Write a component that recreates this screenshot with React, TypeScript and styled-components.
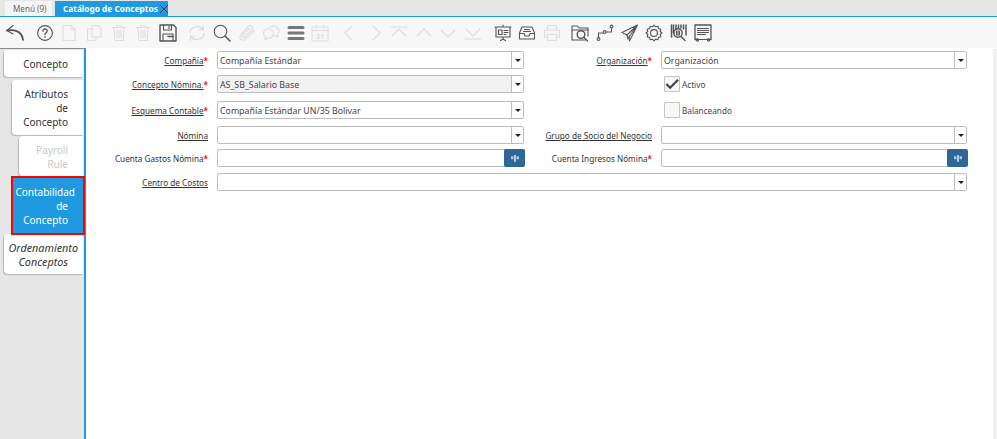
import React from "react";
import styled, { createGlobalStyle } from "styled-components";

const Global = createGlobalStyle`
  html, body { margin: 0; padding: 0; height: 100%; background: #fff; overflow: hidden; }
  #root { height: 100%; }
  * { box-sizing: border-box; }
  body { font-family: "Noto Sans", "Open Sans", sans-serif; }
`;

const Page = styled.div`
  width: 997px;
  height: 439px;
  display: flex;
  flex-direction: column;
`;

const TabBar = styled.div`
  height: 17px;
  flex: none;
  display: flex;
  align-items: flex-start;
  gap: 3px;
  padding: 1px 0 0 5px;
  background: #e6e6e6;
  border-bottom: 1px solid #1f9ae0;
`;

const WindowTab = styled.div<{ $active?: boolean }>`
  position: relative;
  height: 15px;
  width: ${(p) => (p.$active ? "113px" : "47px")};
  padding-left: 8px;
  font-size: ${(p) => (p.$active ? "8.3px" : "8.1px")};
  line-height: 15px;
  font-weight: ${(p) => (p.$active ? 700 : 400)};
  color: ${(p) => (p.$active ? "#fff" : "#666")};
  background: ${(p) => (p.$active ? "#1f9ae0" : "#f5f5f5")};
  white-space: nowrap;
`;

const CloseMark = styled.svg`
  position: absolute;
  right: -1px;
  top: 3px;
  width: 10px;
  height: 10px;
`;

const Toolbar = styled.div`
  height: 31px;
  flex: none;
  display: flex;
  align-items: center;
  padding-left: 3px;
  gap: 5px;
  background: #f7f7f7;
`;

const ToolGroup = styled.div<{ $pull?: boolean }>`
  display: flex;
  margin-left: ${(p) => (p.$pull ? "-1px" : "0")};
`;

const Tool = styled.svg<{ $off?: boolean }>`
  width: 18px;
  height: 18px;
  margin: 0 3.3px;
  fill: none;
  stroke: ${(p) => (p.$off ? "#dedede" : "#555")};
  stroke-width: 1.1;
  stroke-linecap: round;
  stroke-linejoin: round;
  text {
    fill: ${(p) => (p.$off ? "#dedede" : "#555")};
    stroke: none;
    font-size: 7px;
    font-weight: 700;
    text-anchor: middle;
  }
`;

const Main = styled.div`
  flex: 1;
  display: flex;
  min-height: 0;
`;

const Sidebar = styled.nav`
  width: 86px;
  flex: none;
  display: flex;
  flex-direction: column;
  padding-top: 1px;
  background: #e6e6e6;
  border-top: 1px solid #8a8a8a;
  border-right: 2px solid #1f9ae0;
`;

const SideTab = styled.div<{
  $indent: number;
  $height: number;
  $top?: number;
  $low?: boolean;
  $disabled?: boolean;
  $italic?: boolean;
  $selected?: boolean;
}>`
  flex: none;
  display: flex;
  flex-direction: column;
  justify-content: center;
  height: ${(p) => p.$height}px;
  margin-top: ${(p) => p.$top ?? 0}px;
  margin-left: ${(p) => p.$indent}px;
  margin-right: ${(p) => (p.$selected ? -1 : 1)}px;
  padding-right: 15px;
  padding-top: ${(p) => (p.$low ? 2 : 0)}px;
  text-align: right;
  font-size: ${(p) => (p.$italic ? "10.8px" : "10px")};
  line-height: 14px;
  white-space: nowrap;
  font-style: ${(p) => (p.$italic ? "italic" : "normal")};
  color: ${(p) => (p.$selected ? "#fff" : p.$disabled ? "#c9c9c9" : "#333")};
  background: ${(p) => (p.$selected ? "#1f9ae0" : "#fff")};
  border: ${(p) => (p.$selected ? "2px solid #f00" : "none")};
  border-radius: ${(p) => (p.$selected ? "0" : "4px 0 0 4px")};
  box-shadow: ${(p) => (p.$selected ? "none" : "-1px 1px 1px #b5b5b5")};
  position: relative;
  z-index: ${(p) => (p.$selected ? 1 : 0)};
`;

const TabLine = styled.span<{ $over?: number }>`
  display: block;
  margin-right: ${(p) => -(p.$over ?? 0)}px;
`;

const Content = styled.main`
  flex: 1;
  display: flex;
  flex-direction: column;
  padding-top: 2px;
  background: #fff;
  position: relative;
`;

const Scrollbar = styled.div`
  position: absolute;
  right: 0;
  top: 1px;
  bottom: 0;
  width: 4px;
  background: #f1f1f1;
`;

const Row = styled.div<{ $top: number }>`
  display: grid;
  grid-template-columns: 131px 307px 137px 306px;
  height: 18px;
  margin-top: ${(p) => p.$top}px;
  align-items: center;
`;

const Label = styled.label<{ $plain?: boolean }>`
  padding: 1px 9px 0 0;
  text-align: right;
  font-size: 8.2px;
  line-height: 17px;
  white-space: nowrap;
  color: #333;
  span {
    text-decoration: ${(p) => (p.$plain ? "none" : "underline")};
  }
  b {
    color: #e8202a;
    font-weight: 700;
  }
`;

const Field = styled.div<{ $wide?: boolean; $readOnly?: boolean }>`
  display: flex;
  height: 18px;
  grid-column: ${(p) => (p.$wide ? "2 / 5" : "auto")};
  border: 1px solid #bdbdbd;
  border-radius: 2px;
  background: ${(p) => (p.$readOnly ? "#f2f2f2" : "#fff")};
`;

const FieldText = styled.div`
  flex: 1;
  padding: 2px 0 0 2px;
  font-size: 8.8px;
  line-height: 14px;
  color: #444;
  white-space: nowrap;
`;

const Caret = styled.div`
  width: 12px;
  flex: none;
  display: flex;
  align-items: center;
  justify-content: center;
  background: #fff;
  border-left: 1px solid #bdbdbd;
  border-radius: 0 2px 2px 0;
  &::before {
    content: "";
    border: 3px solid transparent;
    border-top: 3px solid #222;
    border-bottom: 0;
  }
`;

const Lookup = styled.div`
  width: 21px;
  height: 18px;
  flex: none;
  margin: -1px -2px -1px 0;
  display: flex;
  align-items: center;
  justify-content: center;
  background: #2d6697;
  border-radius: 2px;
`;

const LookupMark = styled.svg`
  width: 8px;
  height: 7px;
  fill: #a9c8e2;
`;

const CheckRow = styled.div`
  display: flex;
  align-items: center;
  gap: 2px;
  padding-left: 3px;
  font-size: 8.2px;
  color: #444;
`;

const CheckText = styled.span`
  padding-top: 1px;
`;

const Box = styled.div`
  width: 16px;
  height: 16px;
  display: flex;
  align-items: center;
  justify-content: center;
  background: #f8f8f8;
  border: 1px solid #c4c4c4;
  border-radius: 1px;
`;

const Tick = styled.svg`
  width: 15px;
  height: 12px;
  fill: none;
  stroke: #444;
  stroke-width: 2.4;
`;

const Req = () => <b>*</b>;

const LookupField = () => (
  <Field>
    <FieldText />
    <Lookup>
      <LookupMark viewBox="0 0 8 7">
        <path d="M3 0h2v7H3zM0 1.200h2.500v3H0zM5.500 1.200H8v3H5.500z" />
      </LookupMark>
    </Lookup>
  </Field>
);

const SelectField = ({ value, readOnly, wide }: { value?: string; readOnly?: boolean; wide?: boolean }) => (
  <Field $readOnly={readOnly} $wide={wide}>
    <FieldText>{value}</FieldText>
    <Caret />
  </Field>
);

const Undo = () => (
  <Tool viewBox="0 0 18 18">
    <path d="M7 1.500 1 6.500l6 3.500" />
    <path d="M1 6.500c7-1.200 15 .5 16 9.500" strokeWidth="1.800" />
  </Tool>
);
const Help = () => (
  <Tool viewBox="0 0 18 18">
    <circle cx="9" cy="9" r="7.400" />
    <path d="M6.900 7.200c0-3 4.400-2.800 4.300-.1 0 1.800-2.200 1.700-2.200 3.500" strokeWidth="1.300" />
    <path d="M9 12.600v.6" strokeWidth="1.400" />
  </Tool>
);
const NewDoc = () => (
  <Tool $off viewBox="0 0 18 18">
    <path d="M3 1.500h8l4 4v11H3z" />
    <path d="M11 1.500v4h4" />
  </Tool>
);
const CopyDoc = () => (
  <Tool $off viewBox="0 0 18 18">
    <path d="M7 1.500h6l3 3v8.500H7z" />
    <path d="M7 5H2.500v11.500H11V13" />
  </Tool>
);
const Trash = () => (
  <Tool $off viewBox="0 0 18 18">
    <path d="M2.500 3.500h13M6.500 3.500V1.500h5v2M4 3.500l.8 13h8.400l.8-13" />
    <path d="M7 6v8M9 6v8M11 6v8" />
  </Tool>
);
const Save = () => (
  <Tool viewBox="0 0 18 18">
    <path d="M1 1h13.500L17 3.500V17H1z" strokeWidth="1.400" />
    <path d="M4.500 1v5h8V1M4 17v-7h10v7" />
    <path d="M9 12.500h5" strokeWidth="1.600" />
    <path d="M10 2.500v2" />
  </Tool>
);
const Refresh = () => (
  <Tool $off viewBox="0 0 18 18">
    <path d="M2 8.500C2.500 2.500 11 .5 15 5.500M16 9.500c-.5 6-9 8-13 3" strokeWidth="1.500" />
    <path d="M15.500 1.500v4.500H11M2.500 16.500V12H7" />
  </Tool>
);
const Search = () => (
  <Tool viewBox="0 0 18 18">
    <circle cx="7.500" cy="7.500" r="6.300" />
    <path d="m12 12 5 5" strokeWidth="1.500" />
  </Tool>
);
const Clip = () => (
  <Tool $off viewBox="0 0 18 18">
    <path d="M16 6.500 7.500 15c-3.500 3-7.500-.8-4.500-4.500l7.500-8c2.500-2.200 5.500.8 3.300 3.300L6.500 13c-1.300 1.200-3-.5-1.800-1.800L11.500 4.500" />
  </Tool>
);
const Chat = () => (
  <Tool $off viewBox="0 0 18 18">
    <path d="M5.500 14 3 16l.5-3.200C-.5 9.500 2 5 6 5c4.500 0 6.500 3.500 5 6.500-1.200 2.500-3.500 3-5.500 2.500z" />
    <path d="M7 4.500C8.500 1.500 13 1 15.500 3.500c2.200 2.200 1.800 5.500 0 7l.5 2.500-2.500-1.500-2 .2" />
  </Tool>
);
const Rows = () => (
  <Tool viewBox="0 0 18 18">
    <path d="M2 3.500h14M2 9h14M2 14.500h14" stroke="#777" strokeWidth="3" />
  </Tool>
);
const Calendar = () => (
  <Tool $off viewBox="0 0 18 18">
    <path d="M1 3h16v14H1zM1 6.500h16M5 1v3M13 1v3" />
    <text x="9" y="14.500">31</text>
  </Tool>
);
const Nav = ({ d }: { d: string }) => (
  <Tool $off viewBox="0 0 18 18">
    <path d={d} />
  </Tool>
);
const Board = () => (
  <Tool viewBox="0 0 18 18">
    <path d="M2 3h14v10H2zM1 3h16M9 1v2M9 13v2M6.500 16.500 9 15l2.500 1.500" />
    <path d="M4.500 6v4.500h3.500V6zM10 6.500h4M10 8.500h4M10 10.500h2" />
  </Tool>
);
const Tray = () => (
  <Tool viewBox="0 0 18 18">
    <path d="M1.500 9 4 3h10l2.500 6v6h-15z" />
    <path d="M1.500 9.500H6l1 2.500h4l1-2.500h4.500" />
    <path d="M6.500 5.500h5M5.500 7.500h7" />
  </Tool>
);
const Printer = () => (
  <Tool $off viewBox="0 0 18 18">
    <path d="M4.500 6V1.500h9V6M4.500 13H1.500V6h15v7h-3" />
    <path d="M4.500 10.500h9v6h-9z" />
  </Tool>
);
const FolderFind = () => (
  <Tool viewBox="0 0 18 18">
    <path d="M14.500 16H1V2h5.500l1.500 2h9v8" />
    <path d="M1 6h16" />
    <circle cx="10" cy="10.500" r="3.800" strokeWidth="1.400" />
    <path d="m13 13.500 3.500 3.500" strokeWidth="1.400" />
  </Tool>
);
const Route = () => (
  <Tool viewBox="0 0 18 18">
    <circle cx="2.500" cy="15" r="1.400" />
    <circle cx="8.500" cy="8" r="1.400" />
    <circle cx="15.500" cy="2.500" r="1.400" />
    <path d="M2.500 13.500V9h4.500M10 8h5.500V4" />
  </Tool>
);
const Plane = () => (
  <Tool viewBox="0 0 18 18">
    <path d="M16.500 1 1 8.500l5 2.500 10.500-10L8 13l.5 4 8-16z" />
    <path d="m6 11 1 4 1.500-3" />
  </Tool>
);
const Gear = () => (
  <Tool viewBox="0 0 18 18">
    <path d="m9 1 1.500 1.800 2.300-.6.700 2.300 2.300.7-.6 2.300L17 9l-1.800 1.500.6 2.300-2.300.7-.7 2.300-2.300-.6L9 17l-1.500-1.800-2.300.6-.7-2.300-2.300-.7.6-2.300L1 9l1.800-1.500-.6-2.300 2.300-.7.700-2.300 2.300.6z" />
    <circle cx="9" cy="9" r="3.400" />
  </Tool>
);
const Barcode = () => (
  <Tool viewBox="0 0 18 18">
    <path d="M1.500 1v12M3.500 1v8M6 1v4M8.500 1v3M11 1v3M13.500 1v4M16 1v10" strokeWidth="1.500" />
    <circle cx="8" cy="9" r="4.200" strokeWidth="1.400" />
    <path d="M8 6.500v5M6.500 7v4M9.500 7v4" />
    <path d="m11 12.500 4 4" strokeWidth="1.400" />
  </Tool>
);
const Certificate = () => (
  <Tool viewBox="0 0 18 18">
    <path d="M1 1h16v14.500h-3M4 15.500H1V1" strokeWidth="1.300" />
    <path d="M3.500 4.500h11M3.500 6.500h11M3.500 8.500h11M3.500 10.500h8" />
    <path d="M4 15.500h10" />
    <circle cx="3.500" cy="16" r="1.100" />
    <circle cx="14.500" cy="16" r="1.100" />
  </Tool>
);

export default function App() {
  return (
    <Page>
      <Global />
      <TabBar>
        <WindowTab>Menú (9)</WindowTab>
        <WindowTab $active>
          Catálogo de Conceptos
          <CloseMark viewBox="0 0 10 10" fill="none" stroke="#2a3f52" strokeWidth="1">
            <path d="M1 1l8 8M9 1L1 9" />
          </CloseMark>
        </WindowTab>
      </TabBar>
      <Toolbar>
        <ToolGroup>
          <Undo />
        </ToolGroup>
        <ToolGroup>
          <Help />
          <NewDoc />
          <CopyDoc />
          <Trash />
          <Trash />
          <Save />
        </ToolGroup>
        <ToolGroup>
          <Refresh />
          <Search />
          <Clip />
          <Chat />
          <Rows />
          <Calendar />
        </ToolGroup>
        <ToolGroup>
          <Nav d="M11 2 4 9l7 7" />
          <Nav d="m7 2 7 7-7 7" />
          <Nav d="M1 3h16M2 12l7-7 7 7" />
          <Nav d="m2 12 7-7 7 7" />
          <Nav d="m2 6 7 7 7-7" />
          <Nav d="m2 5 7 7 7-7M1 15h16" />
        </ToolGroup>
        <ToolGroup>
          <Board />
          <Tray />
          <Printer />
        </ToolGroup>
        <ToolGroup $pull>
          <FolderFind />
          <Route />
          <Plane />
          <Gear />
          <Barcode />
          <Certificate />
        </ToolGroup>
      </Toolbar>
      <Main>
        <Sidebar>
          <SideTab $indent={4} $height={27}>
            <TabLine>Concepto</TabLine>
          </SideTab>
          <SideTab $indent={12} $height={55} $top={3}>
            <TabLine>Atributos</TabLine>
            <TabLine>de</TabLine>
            <TabLine>Concepto</TabLine>
          </SideTab>
          <SideTab $indent={19} $height={40} $top={1} $low $disabled>
            <TabLine>Payroll</TabLine>
            <TabLine>Rule</TabLine>
          </SideTab>
          <SideTab $indent={11} $height={59} $selected>
            <TabLine $over={7}>Contabilidad</TabLine>
            <TabLine>de</TabLine>
            <TabLine>Concepto</TabLine>
          </SideTab>
          <SideTab $indent={4} $height={40} $top={-1} $low $italic>
            <TabLine $over={10}>Ordenamiento</TabLine>
            <TabLine>Conceptos</TabLine>
          </SideTab>
        </Sidebar>
        <Content>
          <Scrollbar />
          <Row $top={1}>
            <Label><span>Compañía</span><Req /></Label>
            <SelectField value="Compañía Estándar" />
            <Label><span>Organización</span><Req /></Label>
            <SelectField value="Organización" />
          </Row>
          <Row $top={6}>
            <Label><span>Concepto Nómina.</span><Req /></Label>
            <SelectField value="AS_SB_Salario Base" readOnly />
            <span />
            <CheckRow>
              <Box>
                <Tick viewBox="0 0 15 12">
                  <path d="M1.500 6 5.500 10 14 1.500" />
                </Tick>
              </Box>
              <CheckText>Activo</CheckText>
            </CheckRow>
          </Row>
          <Row $top={8}>
            <Label><span>Esquema Contable</span><Req /></Label>
            <SelectField value="Compañía Estándar UN/35 Bolivar" />
            <span />
            <CheckRow>
              <Box />
              <CheckText>Balanceando</CheckText>
            </CheckRow>
          </Row>
          <Row $top={7}>
            <Label><span>Nómina</span></Label>
            <SelectField />
            <Label><span>Grupo de Socio del Negocio</span></Label>
            <SelectField />
          </Row>
          <Row $top={5}>
            <Label $plain><span>Cuenta Gastos Nómina</span><Req /></Label>
            <LookupField />
            <Label $plain><span>Cuenta Ingresos Nómina</span><Req /></Label>
            <LookupField />
          </Row>
          <Row $top={6}>
            <Label><span>Centro de Costos</span></Label>
            <SelectField wide />
          </Row>
        </Content>
      </Main>
    </Page>
  );
}
